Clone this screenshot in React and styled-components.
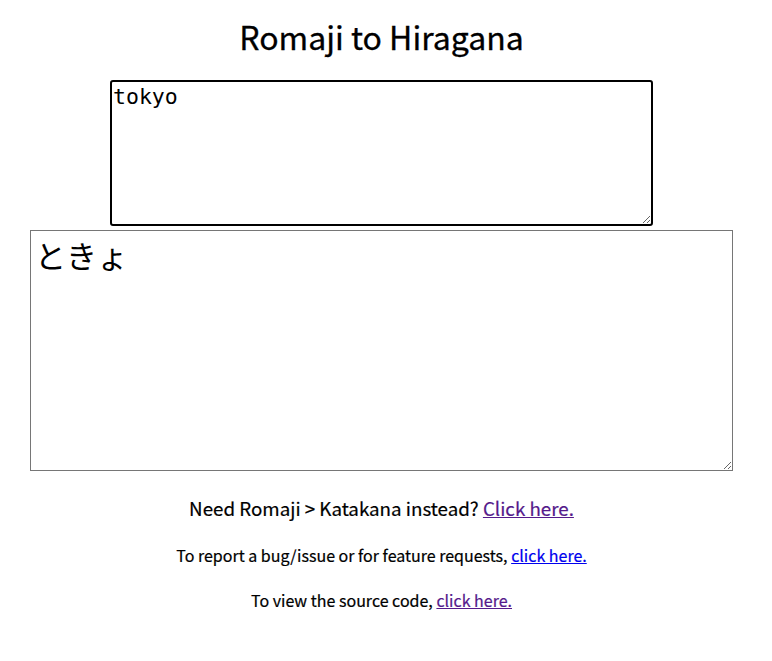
import React, { useState } from 'react';
import styled, { createGlobalStyle } from 'styled-components';

const GlobalStyle = createGlobalStyle`
  body {
    margin: 8px;
    background: #fff;
    font-family: "Noto Sans CJK JP", "Noto Sans", sans-serif;
    color: #000;
  }
`;

const Page = styled.main`
  display: flex;
  flex-direction: column;
  align-items: center;
  padding-right: 9px;
`;

const Title = styled.h1`
  font-size: 32px;
  font-weight: 400;
  -webkit-text-stroke: 0.3px #000;
  margin: 9px 0 25px;
  line-height: 1.2;
`;

const Input = styled.textarea`
  box-sizing: border-box;
  width: 543px;
  height: 146px;
  border: 2px solid #000;
  border-radius: 3px;
  padding: 2px 1px 1px;
  font-family: "DejaVu Sans Mono", monospace;
  font-size: 21.5px;
  outline: none;
  resize: vertical;
`;

const Output = styled.textarea`
  box-sizing: border-box;
  width: 703px;
  height: 241px;
  margin-top: 4px;
  border: 1px solid #767676;
  padding: 1px 4px;
  font-family: "Noto Sans CJK JP", sans-serif;
  font-size: 31px;
  resize: vertical;
`;

const Note = styled.p`
  margin: ${(p) => p.$top}px 0 0;
  font-size: ${(p) => p.$size}px;
  line-height: 1.3;
  -webkit-text-stroke: 0.2px #000;
`;

const Link = styled.a`
  color: ${(p) => (p.$visited ? '#551a8b' : '#0000ee')};
  -webkit-text-stroke-color: currentColor;
  text-decoration: underline;
`;

export default function App() {
  const [romaji, setRomaji] = useState('tokyo');
  return (
    <>
      <GlobalStyle />
      <Page>
        <Title>Romaji to Hiragana</Title>
        <Input value={romaji} onChange={(e) => setRomaji(e.target.value)} spellCheck />
        <Output value="ときょ" readOnly />
        <Note $size={18.75} $top={25}>
          Need Romaji &gt; Katakana instead? <Link href="#" $visited>Click here.</Link>
        </Note>
        <Note $size={16} $top={24}>
          To report a bug/issue or for feature requests, <Link href="#">click here.</Link>
        </Note>
        <Note $size={16} $top={24}>
          To view the source code, <Link href="#" $visited>click here.</Link>
        </Note>
      </Page>
    </>
  );
}
